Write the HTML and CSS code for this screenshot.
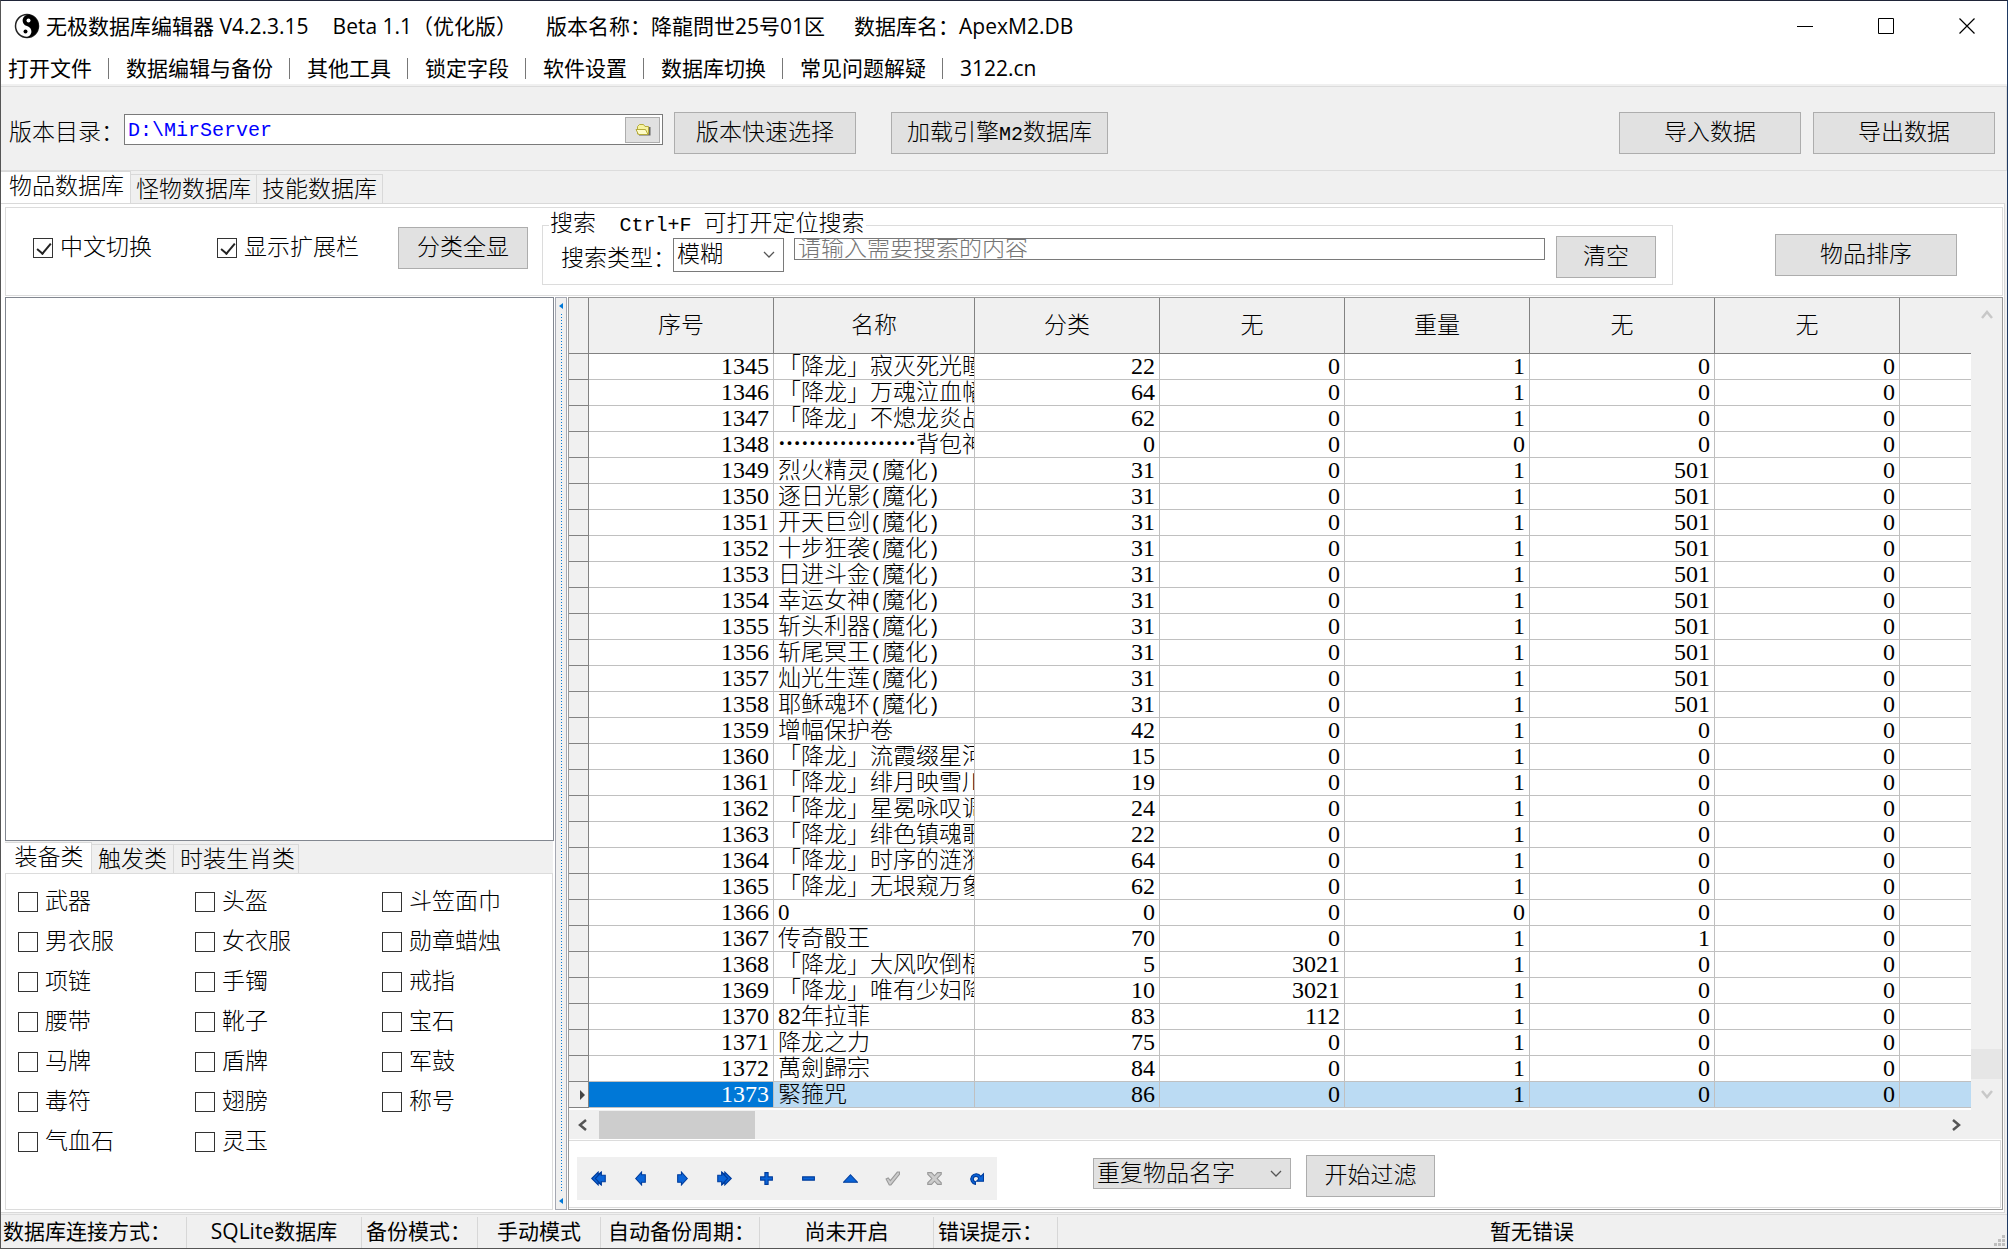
FILE: index.html
```html
<!DOCTYPE html>
<html lang="zh-CN">
<head>
<meta charset="utf-8">
<title>无极数据库编辑器</title>
<link rel="stylesheet" href="styles.css">
</head>
<body>
<header class="titlebar">
  <svg class="logo" viewBox="0 0 26 26" aria-hidden="true"><circle cx="13" cy="13" r="11.5" fill="#fff" stroke="#222" stroke-width="1.5"/><path d="M13 1.5a11.5 11.5 0 0 1 0 23 5.75 5.75 0 0 0 0-11.5 5.75 5.75 0 0 1 0-11.5z" fill="#000" transform="rotate(14 13 13)"/><circle cx="14.5" cy="7.5" r="2" fill="#fff"/><circle cx="11.5" cy="18.5" r="2" fill="#000"/></svg>
  <h1 class="title"><span>无极数据库编辑器 V4.2.3.15</span><span class="beta">Beta 1.1（优化版）</span><span>版本名称：降龍問世25号01区</span><span>数据库名：ApexM2.DB</span></h1>
  <div class="window-buttons">
    <button type="button" aria-label="最小化"><svg width="16" height="16" viewBox="0 0 16 16"><path d="M0 8.5h16" stroke="#000"/></svg></button>
    <button type="button" aria-label="最大化"><svg width="16" height="16" viewBox="0 0 16 16"><path d="M.5.5h15v15H.5z" fill="none" stroke="#000"/></svg></button>
    <button type="button" aria-label="关闭"><svg width="16" height="16" viewBox="0 0 16 16"><path d="M.5.5l15 15M15.5.5l-15 15" stroke="#000" stroke-width="1.2"/></svg></button>
  </div>
</header>
<nav class="menu">
  <a href="#">打开文件</a><a href="#">数据编辑与备份</a><a href="#">其他工具</a><a href="#">锁定字段</a><a href="#">软件设置</a><a href="#">数据库切换</a><a href="#">常见问题解疑</a><a href="#">3122.cn</a>
</nav>
<section class="toolbar">
  <label for="dir">版本目录：</label>
  <div class="path">
    <input id="dir" type="text" value="D:\MirServer">
    <button type="button" class="browse" aria-label="浏览"><svg width="16" height="14" viewBox="0 0 16 14"><path d="M4 11.5h10.500V4" stroke="#666" fill="none" stroke-width="2"/><path d="M2.500 11V3.500l2-2h4l1.500 2h3.500V11z" fill="#f6f3a0" stroke="#b5ab3c"/><path d="M1 6.500h9.500L13 11.500H3.500z" fill="#fdfbc8" stroke="#b5ab3c"/></svg></button>
  </div>
  <button type="button" class="btn quick">版本快速选择</button>
  <button type="button" class="btn load">加载引擎<span class="mono">M2</span>数据库</button>
  <button type="button" class="btn wide push">导入数据</button>
  <button type="button" class="btn wide export">导出数据</button>
</section>
<div class="tabs" role="tablist">
  <button type="button" role="tab" class="tab active" aria-selected="true">物品数据库</button><button type="button" role="tab" class="tab">怪物数据库</button><button type="button" role="tab" class="tab">技能数据库</button>
</div>
<main class="page">
  <section class="filter">
    <label class="check first"><input type="checkbox" checked>中文切换</label>
    <label class="check second"><input type="checkbox" checked>显示扩展栏</label>
    <button type="button" class="btn show-all">分类全显</button>
    <fieldset class="search">
      <legend>搜索&nbsp; <span class="mono">&nbsp;Ctrl+F </span>可打开定位搜索</legend>
      <div class="search-row">
        <label for="mode">搜索类型：</label>
        <div class="combo"><select id="mode"><option>模糊</option></select><svg width="12" height="8" viewBox="0 0 12 8"><path d="M1 1l5 5 5-5" fill="none" stroke="#555" stroke-width="1.300"/></svg></div>
        <input class="query" type="text" placeholder="请输入需要搜索的内容" aria-label="搜索内容">
        <button type="button" class="btn clear">清空</button>
      </div>
    </fieldset>
    <button type="button" class="btn wide sort">物品排序</button>
  </section>
  <div class="split">
    <aside class="side">
      <div class="list"></div>
      <div class="tabs side-tabs" role="tablist">
        <button type="button" role="tab" class="tab active" aria-selected="true">装备类</button><button type="button" role="tab" class="tab">触发类</button><button type="button" role="tab" class="tab">时装生肖类</button>
      </div>
      <div class="kinds">
        <label class="check"><input type="checkbox">武器</label><label class="check"><input type="checkbox">头盔</label><label class="check"><input type="checkbox">斗笠面巾</label>
        <label class="check"><input type="checkbox">男衣服</label><label class="check"><input type="checkbox">女衣服</label><label class="check"><input type="checkbox">勋章蜡烛</label>
        <label class="check"><input type="checkbox">项链</label><label class="check"><input type="checkbox">手镯</label><label class="check"><input type="checkbox">戒指</label>
        <label class="check"><input type="checkbox">腰带</label><label class="check"><input type="checkbox">靴子</label><label class="check"><input type="checkbox">宝石</label>
        <label class="check"><input type="checkbox">马牌</label><label class="check"><input type="checkbox">盾牌</label><label class="check"><input type="checkbox">军鼓</label>
        <label class="check"><input type="checkbox">毒符</label><label class="check"><input type="checkbox">翅膀</label><label class="check"><input type="checkbox">称号</label>
        <label class="check"><input type="checkbox">气血石</label><label class="check"><input type="checkbox">灵玉</label>
      </div>
    </aside>
    <div class="splitter"><svg width="4" height="6" viewBox="0 0 4 6"><path d="M4 0v6L0 3z" fill="#0078d7"/></svg><span class="dots"></span><svg width="4" height="6" viewBox="0 0 4 6"><path d="M4 0v6L0 3z" fill="#0078d7"/></svg></div>
    <section class="data">
      <div class="grid-area">
        <div class="table-wrap">
          <table class="grid">
            <colgroup><col class="c-mark"><col class="c-num"><col class="c-name"><col class="c-num"><col class="c-num"><col class="c-num"><col class="c-num"><col class="c-num"><col></colgroup>
            <thead><tr><th></th><th>序号</th><th>名称</th><th>分类</th><th>无</th><th>重量</th><th>无</th><th>无</th><th></th></tr></thead>
            <tbody>
            <tr><th></th><td>1345</td><td>「降龙」寂灭死光瞳</td><td>22</td><td>0</td><td>1</td><td>0</td><td>0</td><td></td></tr>
            <tr><th></th><td>1346</td><td>「降龙」万魂泣血幡</td><td>64</td><td>0</td><td>1</td><td>0</td><td>0</td><td></td></tr>
            <tr><th></th><td>1347</td><td>「降龙」不熄龙炎战</td><td>62</td><td>0</td><td>1</td><td>0</td><td>0</td><td></td></tr>
            <tr><th></th><td>1348</td><td><span class="cjk">………………</span>背包神</td><td>0</td><td>0</td><td>0</td><td>0</td><td>0</td><td></td></tr>
            <tr><th></th><td>1349</td><td>烈火精灵<span class="mono">(</span>魔化<span class="mono">)</span></td><td>31</td><td>0</td><td>1</td><td>501</td><td>0</td><td></td></tr>
            <tr><th></th><td>1350</td><td>逐日光影<span class="mono">(</span>魔化<span class="mono">)</span></td><td>31</td><td>0</td><td>1</td><td>501</td><td>0</td><td></td></tr>
            <tr><th></th><td>1351</td><td>开天巨剑<span class="mono">(</span>魔化<span class="mono">)</span></td><td>31</td><td>0</td><td>1</td><td>501</td><td>0</td><td></td></tr>
            <tr><th></th><td>1352</td><td>十步狂袭<span class="mono">(</span>魔化<span class="mono">)</span></td><td>31</td><td>0</td><td>1</td><td>501</td><td>0</td><td></td></tr>
            <tr><th></th><td>1353</td><td>日进斗金<span class="mono">(</span>魔化<span class="mono">)</span></td><td>31</td><td>0</td><td>1</td><td>501</td><td>0</td><td></td></tr>
            <tr><th></th><td>1354</td><td>幸运女神<span class="mono">(</span>魔化<span class="mono">)</span></td><td>31</td><td>0</td><td>1</td><td>501</td><td>0</td><td></td></tr>
            <tr><th></th><td>1355</td><td>斩头利器<span class="mono">(</span>魔化<span class="mono">)</span></td><td>31</td><td>0</td><td>1</td><td>501</td><td>0</td><td></td></tr>
            <tr><th></th><td>1356</td><td>斩尾冥王<span class="mono">(</span>魔化<span class="mono">)</span></td><td>31</td><td>0</td><td>1</td><td>501</td><td>0</td><td></td></tr>
            <tr><th></th><td>1357</td><td>灿光生莲<span class="mono">(</span>魔化<span class="mono">)</span></td><td>31</td><td>0</td><td>1</td><td>501</td><td>0</td><td></td></tr>
            <tr><th></th><td>1358</td><td>耶稣魂环<span class="mono">(</span>魔化<span class="mono">)</span></td><td>31</td><td>0</td><td>1</td><td>501</td><td>0</td><td></td></tr>
            <tr><th></th><td>1359</td><td>增幅保护卷</td><td>42</td><td>0</td><td>1</td><td>0</td><td>0</td><td></td></tr>
            <tr><th></th><td>1360</td><td>「降龙」流霞缀星河</td><td>15</td><td>0</td><td>1</td><td>0</td><td>0</td><td></td></tr>
            <tr><th></th><td>1361</td><td>「降龙」绯月映雪川</td><td>19</td><td>0</td><td>1</td><td>0</td><td>0</td><td></td></tr>
            <tr><th></th><td>1362</td><td>「降龙」星冕咏叹调</td><td>24</td><td>0</td><td>1</td><td>0</td><td>0</td><td></td></tr>
            <tr><th></th><td>1363</td><td>「降龙」绯色镇魂歌</td><td>22</td><td>0</td><td>1</td><td>0</td><td>0</td><td></td></tr>
            <tr><th></th><td>1364</td><td>「降龙」时序的涟漪</td><td>64</td><td>0</td><td>1</td><td>0</td><td>0</td><td></td></tr>
            <tr><th></th><td>1365</td><td>「降龙」无垠窥万象</td><td>62</td><td>0</td><td>1</td><td>0</td><td>0</td><td></td></tr>
            <tr><th></th><td>1366</td><td>0</td><td>0</td><td>0</td><td>0</td><td>0</td><td>0</td><td></td></tr>
            <tr><th></th><td>1367</td><td>传奇骰王</td><td>70</td><td>0</td><td>1</td><td>1</td><td>0</td><td></td></tr>
            <tr><th></th><td>1368</td><td>「降龙」大风吹倒梧</td><td>5</td><td>3021</td><td>1</td><td>0</td><td>0</td><td></td></tr>
            <tr><th></th><td>1369</td><td>「降龙」唯有少妇降</td><td>10</td><td>3021</td><td>1</td><td>0</td><td>0</td><td></td></tr>
            <tr><th></th><td>1370</td><td>82年拉菲</td><td>83</td><td>112</td><td>1</td><td>0</td><td>0</td><td></td></tr>
            <tr><th></th><td>1371</td><td>降龙之力</td><td>75</td><td>0</td><td>1</td><td>0</td><td>0</td><td></td></tr>
            <tr><th></th><td>1372</td><td>萬劍歸宗</td><td>84</td><td>0</td><td>1</td><td>0</td><td>0</td><td></td></tr>
            <tr class="current"><th><svg width="5" height="10" viewBox="0 0 5 10"><path d="M0 0v10l5-5z" fill="#444"/></svg></th><td>1373</td><td>緊箍咒</td><td>86</td><td>0</td><td>1</td><td>0</td><td>0</td><td></td></tr>
            </tbody>
          </table>
        </div>
        <div class="vscroll"><svg width="12" height="10" viewBox="0 0 12 10"><path d="M1 8l5-6 5 6" fill="none" stroke="#c8c8c8" stroke-width="2.500"/></svg><span class="vthumb"></span><svg width="12" height="10" viewBox="0 0 12 10"><path d="M1 2l5 6 5-6" fill="none" stroke="#c8c8c8" stroke-width="2.500"/></svg></div>
      </div>
      <div class="hscroll"><svg width="10" height="12" viewBox="0 0 10 12"><path d="M8 1L2 6l6 5" fill="none" stroke="#555" stroke-width="2.500"/></svg><span class="hthumb"></span><svg width="10" height="12" viewBox="0 0 10 12"><path d="M2 1l6 5-6 5" fill="none" stroke="#555" stroke-width="2.500"/></svg></div>
      <div class="footer">
        <div class="navigator">
          <button type="button" aria-label="首条"><svg viewBox="0 0 14 14"><path d="M.7 7l6-6v2.500L9.500 1v12L6.700 10.500V13z"/><path d="M4 7l5.500-5.500V4h3.800v6H9.500v2.500z"/></svg></button>
          <button type="button" aria-label="上一条"><svg viewBox="0 0 14 14"><path d="M2.500 7l5.500-6v2.500h3.500v7H8V13z"/></svg></button>
          <button type="button" aria-label="下一条"><svg viewBox="0 0 14 14"><path d="M11.500 7L6 1v2.500H2.500v7H6V13z"/></svg></button>
          <button type="button" aria-label="末条"><svg viewBox="0 0 14 14"><path d="M13.300 7l-6-6v2.500L4.500 1v12l2.800-2.500V13z"/><path d="M10 7L4.500 1.500V4H.7v6h3.800v2.500z"/></svg></button>
          <button type="button" aria-label="新增"><svg viewBox="0 0 14 14"><path d="M5.500 1.500h3v4h4v3h-4v4h-3v-4h-4v-3h4z"/></svg></button>
          <button type="button" aria-label="删除"><svg viewBox="0 0 14 14"><path d="M1.500 5.500h11v3h-11z"/></svg></button>
          <button type="button" aria-label="编辑"><svg viewBox="0 0 14 14"><path d="M7 3.500l6.500 7H.5z"/></svg></button>
          <button type="button" aria-label="保存" disabled><svg viewBox="0 0 14 14"><path d="M1 7.500l2-1 2 2.500 6.500-8h2v2l-8 10H4z"/></svg></button>
          <button type="button" aria-label="取消" disabled><svg viewBox="0 0 14 14"><path d="M.7 2V1.500h3.500L7 4.500l2.800-3h3.500V3L9.500 7l3.800 4v1.500H9.800l-2.800-3-2.800 3H.7V11l3.800-4L.7 3z"/></svg></button>
          <button type="button" aria-label="刷新"><svg viewBox="0 0 14 14"><path d="M6 12.500a5 5 0 1 1 5-7.500l2.500-2.500v7H7l2-2a2.500 2.500 0 1 0-3 2.500z"/></svg></button>
        </div>
        <div class="combo dup"><select aria-label="过滤方式"><option>重复物品名字</option></select><svg width="12" height="8" viewBox="0 0 12 8"><path d="M1 1l5 5 5-5" fill="none" stroke="#555" stroke-width="1.300"/></svg></div>
        <button type="button" class="btn run">开始过滤</button>
      </div>
    </section>
  </div>
</main>
<footer class="status">
  <span class="s1">数据库连接方式：</span><span class="s2">SQLite数据库</span><span class="s3">备份模式：</span><span class="s4">手动模式</span><span class="s5">自动备份周期：</span><span class="s6">尚未开启</span><span class="s7">错误提示：</span><span class="s8">暂无错误</span>
  <svg class="grip" width="11" height="11" viewBox="0 0 11 11"><path d="M8 0h3v3H8zM4 4h3v3H4zM8 4h3v3H8zM0 8h3v3H0zM4 8h3v3H4zM8 8h3v3H8z" fill="#bfbfbf"/></svg>
</footer>
</body>
</html>
```
FILE: styles.css
```css
* { box-sizing: border-box; }

body {
  margin: 0;
  min-height: 100vh;
  display: flex;
  flex-direction: column;
  border: 1px solid #555;
  border-top-color: #1f2438;
  border-right-color: #1f3a63;
  background: #f0f0f0;
  color: #000;
  font: 300 23px/26px "Liberation Serif", "Noto Sans CJK SC", serif;
}

button, input, select { font: inherit; color: inherit; margin: 0; border-radius: 0; }
button { padding: 0; border: 0; background: none; white-space: nowrap; }
svg { display: block; flex: none; }
label, legend, a, span { white-space: nowrap; }
.mono { font-family: "Liberation Mono", monospace; font-size: 20px; line-height: 20px; }
.cjk { font-family: "Noto Sans CJK SC", sans-serif; font-weight: 700; }

/* title and menu */
.titlebar {
  display: flex;
  align-items: center;
  height: 52px;
  padding: 0 0 2px 13px;
  background: #fff;
}
.logo { width: 26px; height: 26px; }
.title {
  display: flex;
  gap: 29px;
  margin: 0 auto 0 6px;
  font: 400 21px/28px "Open Sans", "Noto Sans CJK SC", sans-serif;
}
.title .beta { margin-left: -5px; }
.titlebar, .menu, .status { font: 400 21px/28px "Open Sans", "Noto Sans CJK SC", sans-serif; }
.window-buttons { display: flex; }
.window-buttons button { display: grid; place-items: center; width: 81px; height: 50px; }
.menu { display: flex; align-items: center; height: 31px; background: #fff; padding-left: 7px; }
.menu a { color: #000; text-decoration: none; line-height: 21px; }
.menu a + a { margin-left: 16px; padding-left: 17px; border-left: 1px solid #777; }

/* buttons */
.btn { height: 42px; border: 1px solid #adadad; background: #e1e1e1; text-align: center; flex: none; }
.wide { width: 182px; }

/* directory bar */
.toolbar {
  display: flex;
  align-items: center;
  height: 85px;
  margin-top: 2px;
  padding: 8px 11px 0 8px;
  border: 1px solid #dcdcdc;
  border-left: 0;
}
.path {
  display: flex;
  align-items: center;
  width: 539px;
  height: 31px;
  margin: 0 11px 6px 0;
  padding-right: 2px;
  border: 1px solid #7a7a7a;
  background: #fff;
}
.toolbar > label { width: 115px; }
.path input {
  flex: 1;
  min-width: 0;
  padding: 2px 3px 0;
  border: 0;
  background: none;
  color: #00f;
  font: 20px/26px "Liberation Mono", monospace;
}
.browse { display: grid; place-items: center; width: 35px; height: 26px; border: 1px solid #adadad; background: #e1e1e1; }
.quick { width: 182px; margin-right: 35px; }
.load { width: 217px; }
.push { margin-left: auto; }
.export { margin-left: 12px; }

/* tabs */
.tabs { display: flex; align-items: flex-end; height: 32px; }
.tab { height: 29px; width: 126px; padding-top: 2px; border: 1px solid #d9d9d9; border-width: 1px 1px 0 0; background: #f0f0f0; }
.tab.active { height: 32px; width: 130px; background: #fff; padding: 0 0 1px 2px; border-left: 0; }

.page {
  flex: 1;
  display: flex;
  flex-direction: column;
  margin-right: 2px;
  padding: 3px 1px 2px 4px;
  border: 1px solid #d9d9d9;
  border-left: 0;
  background: #fff;
}

/* filter bar */
.filter {
  display: flex;
  align-items: flex-start;
  height: 89px;
  margin-bottom: 1px;
  border: 1px solid #dcdcdc;
}
.check { display: flex; align-items: center; gap: 7px; }
.check input {
  appearance: none;
  flex: none;
  width: 20px;
  height: 20px;
  border: 1px solid #333;
  background: #fff;
}
.check input:checked::after {
  content: "";
  display: block;
  width: 6px;
  height: 12px;
  margin: 1px 0 0 6px;
  border: solid #222;
  border-width: 0 2px 2px 0;
  rotate: 40deg;
}
.filter .check { margin-top: 27px; }
.first { margin-left: 27px; width: 184px; }
.second { width: 181px; }
.show-all { width: 130px; margin: 19px 14px 0 0; }
.search {
  flex: 1;
  min-width: 0;
  height: 71px;
  margin: 6px 102px 0 0;
  padding: 0 16px 0 18px;
  border: 1px solid #dcdcdc;
}
.search legend { margin-left: -12px; padding: 0 1px; line-height: 20px; }
.search-row { display: flex; align-items: flex-start; }
.search-row label { width: 112px; margin-top: 10px; }
.combo { display: grid; align-items: center; width: 111px; height: 34px; margin-top: 2px; }
.combo > * { grid-area: 1 / 1; }
.combo select {
  appearance: none;
  width: 100%;
  height: 100%;
  padding: 0 3px;
  border: 1px solid #7a7a7a;
  background: #fff;
}
.combo svg { justify-self: end; margin-right: 9px; pointer-events: none; }
.query {
  flex: 1;
  min-width: 0;
  height: 22px;
  margin: 2px 11px 0 10px;
  padding: 0 3px;
  border: 1px solid #7a7a7a;
  background: #fff;
}
.query::placeholder { color: #757575; opacity: 1; }
.clear { width: 100px; }
.sort { margin: 26px 45px 0 0; }

/* left column */
.split { flex: 1; display: flex; }
.side { display: flex; flex-direction: column; width: 549px; }
.list { flex: 1; border: 1px solid #828790; background: #fff; }
.side-tabs { background: #f0f0f0; height: 32px; margin-right: 1px; }
.side-tabs .tab { width: 82px; }
.side-tabs .tab.active { width: 87px; height: 31px; }
.side-tabs .tab:last-child { width: 125px; padding-left: 3px; }
.kinds {
  display: grid;
  grid-template-columns: 177px 187px 1fr;
  grid-auto-rows: 40px;
  height: 337px;
  margin-right: 1px;
  padding: 8px 0 0 12px;
  border: 1px solid #dcdcdc;
}

/* splitter */
.splitter {
  display: flex;
  flex-direction: column;
  align-items: center;
  width: 12px;
  margin: 0 1px;
  padding: 5px 0;
  border: 1px solid #a5a8b2;
  background: #f0f0f0;
}
.dots {
  flex: 1;
  width: 1px;
  margin: 5px 0;
  background: repeating-linear-gradient(#0078d7 0 1px, transparent 1px 3px);
}

/* data grid */
.data { flex: 1; min-width: 0; display: flex; flex-direction: column; border: 1px solid #999; }
.grid-area { display: flex; }
.table-wrap { flex: 1; min-width: 0; overflow: hidden; padding-bottom: 2px; }
.grid { width: 100%; table-layout: fixed; border-collapse: separate; border-spacing: 0; line-height: 25px; }
.c-mark { width: 20px; }
.c-num { width: 185px; }
.c-name { width: 201px; }
.grid th { padding: 0; background: #f0f0f0; font-weight: inherit; border: solid #828282; border-width: 0 1px 1px 0; }
.grid thead th { height: 56px; }
.grid th:last-child, .grid td:last-child { border-right: 0; }
.grid td {
  height: 26px;
  padding: 0 4px;
  border: solid #c0c0c0;
  border-width: 0 1px 1px 0;
  overflow: hidden;
  font-size: 24px;
  text-align: right;
  white-space: nowrap;
}
.grid td > span { line-height: 20px; }
.grid td:nth-child(3) { font-size: 23px; text-align: left; padding-right: 0; }
.grid .current td { background: #bbdbf3; }
.grid .current td:nth-child(2) { background: #0078d7; color: #fff; }
.grid tbody th svg { margin-left: 11px; }

.vscroll { display: flex; flex-direction: column; align-items: center; width: 31px; padding: 12px 0 11px; background: #f0f0f0; }
.vthumb { width: 100%; height: 30px; margin: auto 0 10px; background: #e6e6e6; }
.hscroll { display: flex; align-items: center; height: 29px; padding: 0 41px 0 9px; background: #f0f0f0; }
.hthumb { width: 156px; height: 28px; margin: 0 auto 0 11px; background: #cdcdcd; }

.footer {
  flex: 1;
  display: flex;
  align-items: flex-start;
  margin: 1px 1px 1px 0;
  padding: 14px 0 0 8px;
  border: 1px solid #dcdcdc;
  border-left: 0;
}
.navigator { display: flex; height: 43px; margin: 2px 96px 0 0; background: #f0f0f0; }
.navigator button { display: grid; place-items: center; width: 42px; }
.navigator svg { width: 15px; height: 15px; fill: #0a64d8; stroke: #003c9c; stroke-width: 1; }
.navigator button:disabled svg { fill: #ccc; stroke: #999; }
.dup { width: 198px; height: 31px; margin: 3px 15px 0 0; }
.dup select { background: #e1e1e1; border-color: #adadad; }
.run { width: 129px; }

/* status bar */
.status { display: flex; height: 34px; padding: 2px 1px 0 0; border-top: 1px solid #dcdcdc; margin-top: 1px; }
.status span { border-right: 1px solid #d7d7d7; text-align: center; overflow: hidden; }
.status .s1, .status .s3, .status .s5, .status .s7 { text-align: left; padding-left: 4px; }
.status .s1 { width: 186px; padding-left: 2px; }
.status .s2 { width: 175px; }
.status .s3 { width: 116px; }
.status .s4 { width: 123px; }
.status .s5 { width: 159px; padding-left: 7px; }
.status .s6 { width: 174px; }
.status .s7 { width: 124px; }
.status .s8 { flex: 1; border: 0; }
.grip { align-self: flex-end; margin: 0 1px 2px -12px; }
```
